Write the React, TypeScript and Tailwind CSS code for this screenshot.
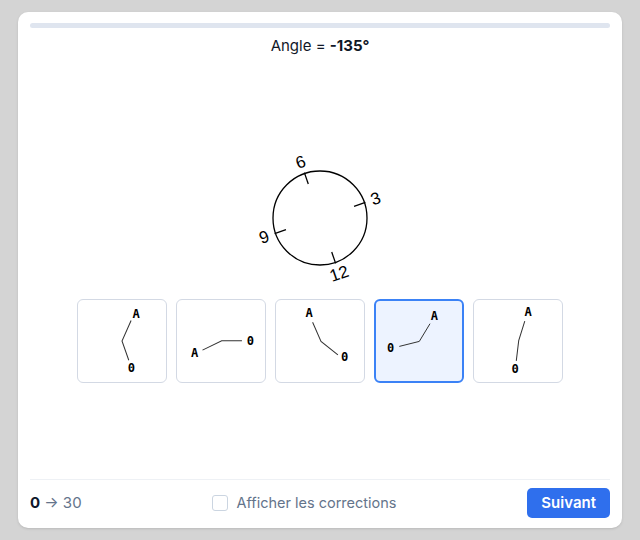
import React from 'react';

type Pt = [number, number];

interface Choice {
  a: Pt;
  o: Pt;
  line: Pt[];
}

// Positions measured in the 90x84 box
const choices: Choice[] = [
  { a: [59, 15], o: [54.3, 69], line: [[54, 21.7], [45, 42], [51.7, 61]] },
  { a: [19, 54], o: [74, 42.3], line: [[26.7, 51], [45.7, 41.7], [65.7, 41.7]] },
  { a: [34.3, 14.7], o: [69.3, 58], line: [[37.7, 23.4], [46, 42.4], [62.7, 55.7]] },
  { a: [60.3, 16.7], o: [16.7, 49], line: [[56, 24.7], [45.3, 42.4], [25.3, 47.4]] },
  { a: [55, 13.3], o: [42.3, 70], line: [[51.7, 22.3], [45.7, 41.7], [43.3, 61.7]] },
];

const selected = 3;

// Dial numbers, angle clockwise from the top
const marks = [
  { label: '12', deg: 161 },
  { label: '3', deg: 71 },
  { label: '6', deg: 341 },
  { label: '9', deg: 251 },
];

function polar(r: number, deg: number): Pt {
  const t = (deg * Math.PI) / 180;
  return [100 + r * Math.sin(t), 80 - r * Math.cos(t)];
}

function Dial() {
  return (
    <svg width="200" height="160" viewBox="0 0 200 160" className="mx-auto mt-[80px] block overflow-visible">
      <circle cx="100" cy="80" r="47" fill="none" stroke="#000" strokeWidth="1.3" />
      {marks.map(m => {
        const [x1, y1] = polar(36, m.deg);
        const [x2, y2] = polar(48, m.deg);
        const [lx, ly] = polar(59, m.deg);
        return (
          <g key={m.label}>
            <line x1={x1} y1={y1} x2={x2} y2={y2} stroke="#000" strokeWidth="1.3" />
            <text
              x={lx}
              y={ly}
              textAnchor="middle"
              dominantBaseline="central"
              fontSize="17"
              fontFamily="'Liberation Sans', Arial, sans-serif"
              transform={`rotate(-19 ${lx} ${ly})`}
            >
              {m.label}
            </text>
          </g>
        );
      })}
    </svg>
  );
}

function ChoiceBox({ c, active }: { c: Choice; active: boolean }) {
  return (
    <div
      className={
        active
          ? 'h-[84px] w-[90px] rounded-[6px] border-2 border-[#3b82f6] bg-[#edf3ff]'
          : 'h-[84px] w-[90px] rounded-[6px] border-[1.5px] border-[#d3d9e4] bg-white'
      }
    >
      <svg viewBox={active ? '2 2 86 80' : '1.5 1.5 87 81'} className="block h-full w-full">
        <polyline points={c.line.map(p => p.join(',')).join(' ')} fill="none" stroke="#333" strokeWidth="1" />
        {[
          { t: 'A', p: c.a },
          { t: '0', p: c.o },
        ].map(l => (
          <text
            key={l.t}
            x={l.p[0]}
            y={l.p[1]}
            textAnchor="middle"
            dominantBaseline="central"
            fontSize="12"
            fontWeight="700"
            fontFamily="'DejaVu Sans Mono', 'Liberation Mono', monospace"
            fill="#000"
          >
            {l.t}
          </text>
        ))}
      </svg>
    </div>
  );
}

export default function App() {
  return (
    <div className="h-[540px] w-full bg-[#d4d4d4] px-[18px] py-[12px] font-['Inter',sans-serif]">
      <div className="flex h-full flex-col rounded-[10px] bg-white px-[12px] pt-[11px] shadow-sm">
        <div className="h-[5px] w-full rounded-full bg-[#dfe5ef]" />
        <div className="mt-[6px] text-center text-[15px] leading-[24px] text-[#111827]">
          Angle = <span className="font-bold">-135°</span>
        </div>

        <Dial />

        <div className="mt-px flex justify-center gap-[9px]">
          {choices.map((c, i) => (
            <ChoiceBox key={i} c={c} active={i === selected} />
          ))}
        </div>

        <div className="flex-1" />

        <div className="flex items-center justify-between border-t border-[#eef1f5] pt-[8px] pb-[10px]">
          <div className="text-[15px] leading-[30px] text-[#64748b]">
            <span className="font-bold text-[#0f172a]">0</span> → 30
          </div>
          <label className="flex items-center gap-[8px] text-[14.5px] text-[#64748b]">
            <span className="h-[16px] w-[16px] rounded-[3px] border-[1.5px] border-[#cbd5e1] bg-white" />
            Afficher les corrections
          </label>
          <button className="h-[30px] rounded-[5px] bg-[#2f6fed] px-[14px] text-[15px] font-semibold text-white">
            Suivant
          </button>
        </div>
      </div>
    </div>
  );
}
